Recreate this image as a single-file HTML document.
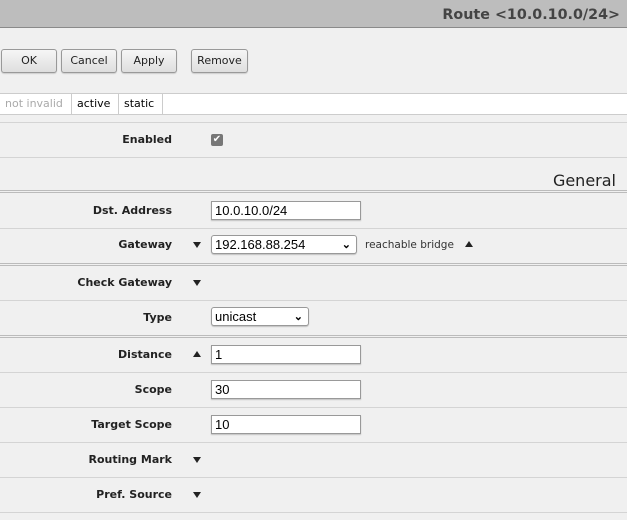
<!DOCTYPE html>
<html><head><style>
body{margin:0;width:627px;height:520px;background:#f0f0f0;font-family:"DejaVu Sans","Liberation Sans",sans-serif;position:relative;overflow:hidden}
.a{position:absolute}
.hdr{left:0;top:0;width:627px;height:27px;background:#bdbdbd;border-bottom:1px solid #8a8a8a}
.title{right:7px;top:7px;font-size:14.3px;font-weight:bold;color:#444}
.btn{top:49px;height:22px;border:1px solid #999;border-radius:3px;background:linear-gradient(#f6f6f6,#dedede);font-size:11px;text-align:center;line-height:22px;color:#222;box-shadow:0 1px 1px rgba(0,0,0,.15)}
.sb{left:0;top:93px;width:627px;height:20px;background:#fff;border-top:1px solid #ccc;border-bottom:1px solid #ccc}
.cell{top:0;height:20px;line-height:20px;font-size:11px;border-right:1px solid #ccc;padding:0 5px;box-sizing:border-box;white-space:nowrap}
.line{left:0;width:627px;height:1px;background:#d4d4d4}
.lbl{right:455px;font-size:11px;font-weight:bold;color:#222;white-space:nowrap}
.in{left:211px;height:19px;background:#fff;border:1px solid #999;box-sizing:border-box;font-family:"Liberation Sans",sans-serif;font-size:13px;line-height:18px;padding-left:3px;box-shadow:0 1px 1px rgba(0,0,0,.2)}
.sel{border-radius:3px}
.dn{width:0;height:0;border-left:4px solid transparent;border-right:4px solid transparent;border-top:6px solid #222}
.up{width:0;height:0;border-left:4px solid transparent;border-right:4px solid transparent;border-bottom:6px solid #222}
</style></head><body>
<div class="a hdr"></div>
<div class="a title">Route &lt;10.0.10.0/24&gt;</div>
<div class="a btn" style="left:1px;width:54px">OK</div>
<div class="a btn" style="left:61px;width:54px">Cancel</div>
<div class="a btn" style="left:121px;width:54px">Apply</div>
<div class="a btn" style="left:191px;width:55px">Remove</div>
<div class="a sb">
<div class="a cell" style="left:0;width:72px;color:#aaa">not invalid</div>
<div class="a cell" style="left:72px;width:47px">active</div>
<div class="a cell" style="left:119px;width:44px">static</div>
</div>
<div class="a line" style="top:122px"></div>
<div class="a lbl" style="top:133px">Enabled</div>
<div class="a" style="left:211px;top:134px;width:12px;height:12px;background:#777;border-radius:2px;color:#fff;font-size:10px;line-height:12px;text-align:center">✔</div>
<div class="a line" style="top:157px"></div>
<div class="a" style="right:11px;top:171px;font-size:16px;color:#222">General</div>
<div class="a line" style="top:190px;background:#bbb"></div>
<div class="a line" style="top:192px;background:#bbb"></div>
<div class="a lbl" style="top:204px">Dst. Address</div>
<div class="a in" style="top:201px;width:150px">10.0.10.0/24</div>
<div class="a line" style="top:228px"></div>
<div class="a lbl" style="top:238px">Gateway</div>
<div class="a dn" style="left:193px;top:242px"></div>
<div class="a in sel" style="top:235px;width:146px">192.168.88.254<span style="position:absolute;right:5px;font-size:11px;font-weight:bold">⌄</span></div>
<div class="a" style="left:365px;top:239px;font-size:10.5px;color:#333">reachable bridge</div>
<div class="a up" style="left:465px;top:241px"></div>
<div class="a line" style="top:263px;background:#bbb"></div>
<div class="a line" style="top:265px;background:#bbb"></div>
<div class="a lbl" style="top:276px">Check Gateway</div>
<div class="a dn" style="left:193px;top:280px"></div>
<div class="a line" style="top:300px"></div>
<div class="a lbl" style="top:311px">Type</div>
<div class="a in sel" style="top:307px;width:98px">unicast<span style="position:absolute;right:5px;font-size:11px;font-weight:bold">⌄</span></div>
<div class="a line" style="top:335px;background:#bbb"></div>
<div class="a line" style="top:337px;background:#bbb"></div>
<div class="a lbl" style="top:348px">Distance</div>
<div class="a up" style="left:193px;top:351px"></div>
<div class="a in" style="top:345px;width:150px">1</div>
<div class="a line" style="top:372px"></div>
<div class="a lbl" style="top:383px">Scope</div>
<div class="a in" style="top:380px;width:150px">30</div>
<div class="a line" style="top:407px"></div>
<div class="a lbl" style="top:418px">Target Scope</div>
<div class="a in" style="top:415px;width:150px">10</div>
<div class="a line" style="top:442px"></div>
<div class="a lbl" style="top:453px">Routing Mark</div>
<div class="a dn" style="left:193px;top:457px"></div>
<div class="a line" style="top:477px"></div>
<div class="a lbl" style="top:488px">Pref. Source</div>
<div class="a dn" style="left:193px;top:492px"></div>
<div class="a line" style="top:512px"></div>
</body></html>
